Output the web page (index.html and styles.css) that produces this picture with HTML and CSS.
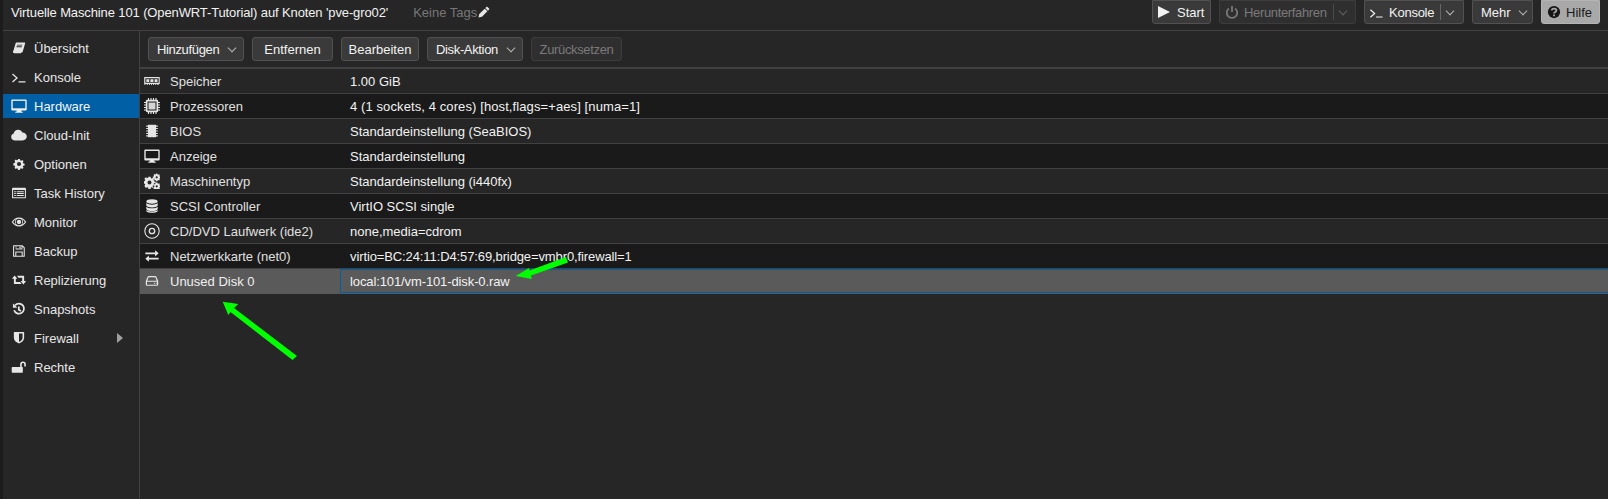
FILE: index.html
```html
<!DOCTYPE html>
<html lang="de">
<head>
<meta charset="utf-8">
<title>Hardware</title>
<link rel="stylesheet" href="styles.css">
</head>
<body>
<svg class="defs" width="0" height="0" aria-hidden="true">
  <defs>
    <symbol id="i-book" viewBox="0 -1.500 16 19"><path fill="currentColor" d="M5 1.500h9.600c.6 0 .9.500.7 1l-2.800 9.600c-.2.700-.7 1.100-1.400 1.100H2.600c-.7 0-1.300-.5-1.300-1.300 0-.3.100-.6.200-1L4 2.500c.2-.6.500-1 1-1zM5.600 4v1h6.200l.3-1zM5 6v1h6.200l.3-1zM2.600 11.400c-.2.500 0 .8.500.8h8.300l-.2.900c-.2.600-.6 1-1.200 1H2.400c-1 0-1.600-.6-1.600-1.600 0-.4 0-.7.200-1.100z"/></symbol>
    <symbol id="i-term" viewBox="0 0 16 16"><path fill="none" stroke="currentColor" stroke-width="1.300" d="M1.500 5 6 9 1.500 13M7.500 12.800h7"/></symbol>
    <symbol id="i-desktop" viewBox="0 0 16 16"><path fill="currentColor" d="M1.200 1.500h13.600c.5 0 .9.400.9.900v9.200c0 .5-.4.900-.9.900H10.200l.4 1.300h1.200v.9H4.200v-.9h1.200l.4-1.300H1.200c-.5 0-.9-.4-.9-.9V2.400c0-.5.400-.9.900-.9zM1.700 2.900v7.400h12.600V2.900z"/></symbol>
    <symbol id="i-desktop-s" viewBox="0 0 16 16"><path fill="currentColor" d="M1.200 1.500h13.600c.5 0 .9.400.9.900v9.200c0 .5-.4.900-.9.900H10.200l.4 1.300h1.200v.9H4.200v-.9h1.200l.4-1.300H1.200c-.5 0-.9-.4-.9-.9V2.400c0-.5.400-.9.900-.9z"/><path fill="#005fa5" d="M1.700 2.900v7.400h12.600V2.900z"/></symbol>
    <symbol id="i-cloud" viewBox="0 0 16 16"><path fill="currentColor" d="M4 13.500C1.900 13.500.2 12 .2 10c0-1.600 1-2.900 2.500-3.400C3 4.400 4.900 2.700 7.200 2.700c1.900 0 3.500 1.100 4.200 2.800 2.500.1 4.400 1.900 4.400 4.100 0 2.200-1.900 3.900-4.300 3.900z"/></symbol>
    <symbol id="i-gear" viewBox="-3 -3 22 22"><path fill="currentColor" fill-rule="evenodd" d="M6.800 1h2.400l.4 1.900 1.300.6 1.600-1 1.700 1.700-1 1.600.6 1.300 1.900.4v2.400l-1.900.4-.6 1.300 1 1.600-1.700 1.700-1.600-1-1.300.6-.4 1.900H6.800l-.4-1.900-1.300-.6-1.600 1-1.700-1.700 1-1.600-.6-1.300-1.900-.4V6.800l1.900-.4.6-1.300-1-1.600 1.700-1.700 1.600 1 1.300-.6zM8 5.200a2.800 2.800 0 1 0 0 5.600 2.800 2.800 0 0 0 0-5.600z"/></symbol>
    <symbol id="i-list" viewBox="-1 -1 18 18"><path fill="currentColor" fill-rule="evenodd" d="M1.200 2h13.600c.6 0 1 .4 1 1v10c0 .6-.4 1-1 1H1.200c-.6 0-1-.4-1-1V3c0-.6.400-1 1-1zM1.400 4.500v8.300h13.200V4.500zM2.600 6h1.800v1.100H2.600zM5.400 6h8v1.100h-8zM2.600 8.100h1.800v1.100H2.600zM5.400 8.100h8v1.100h-8zM2.600 10.200h1.800v1.100H2.600zM5.400 10.200h8v1.100h-8z"/></symbol>
    <symbol id="i-eye" viewBox="-.5 -.5 17 17"><path fill="currentColor" fill-rule="evenodd" d="M8 3.200c3.300 0 6 1.900 7.700 4.800C14 10.900 11.300 12.800 8 12.800S2 10.900.3 8C2 5.100 4.700 3.200 8 3.200zM8 4.600a3.400 3.400 0 1 0 0 6.800 3.400 3.400 0 0 0 0-6.800zM1.700 8c1 1.300 2 2.300 3.300 2.900A4.400 4.400 0 0 1 5 5.100C3.700 5.700 2.700 6.700 1.700 8zM11 5.100a4.400 4.400 0 0 1 0 5.800c1.300-.6 2.300-1.600 3.300-2.900-1-1.300-2-2.300-3.300-2.900z"/><circle cx="8" cy="8" r="2.300" fill="currentColor"/></symbol>
    <symbol id="i-save" viewBox="-1 -1 18 18"><path fill="currentColor" fill-rule="evenodd" d="M2 1.500h10l2.500 2.500v9.800c0 .4-.3.700-.7.700H2c-.4 0-.7-.3-.7-.7V2.200c0-.4.300-.7.700-.7zM2.500 2.700v10.600h1.300V8.500h8.400v4.800h1.100V4.500l-1.400-1.400v3.200H4.300V2.700zM5 2.700v2.500h5.800V2.700zM8.500 3h1.300v1.900H8.500zM5 9.700v3.600h6V9.700z"/></symbol>
    <symbol id="i-retweet" viewBox="-1 -2 20 20"><path fill="currentColor" d="M3.500 2.500 7 6.500H5v4h5.500l1.800 2.500H3.300c-.4 0-.7-.3-.7-.7V6.500H.1zM6.500 2.700h8.200c.4 0 .7.300.7.700v6h2.500L14.500 13.500 11 9.400h2V5.200H8.300z"/></symbol>
    <symbol id="i-history" viewBox="-1.500 -1.500 19 19"><path fill="none" stroke="currentColor" stroke-width="2.100" d="M3.300 3.700A6 6 0 1 1 2.200 9.500M7.800 5v3.800l2.500 1.500"/><path fill="currentColor" d="M.8 1.500 6 6.600H.8z"/></symbol>
    <symbol id="i-shield" viewBox="-1.500 -1 19 19"><path fill="currentColor" fill-rule="evenodd" d="M2.500 1.500h11c.4 0 .6.300.6.600v6.300c0 3.200-3.100 5.300-6.100 6.600-3-1.300-6.100-3.400-6.100-6.600V2.100c0-.3.200-.6.600-.6zM8 3.200v9.900c2.100-1 4.200-2.600 4.200-4.700V3.200z"/></symbol>
    <symbol id="i-unlock" viewBox="-1 -1 18 18"><path fill="currentColor" d="M.5 8h8.800V5a3.200 3.200 0 0 1 6.400 0v2.400h-1.800V5a1.400 1.400 0 0 0-2.800 0v3h.5c.4 0 .7.300.7.700v5c0 .4-.3.700-.7.700H.5c-.4 0-.7-.3-.7-.7v-5c0-.4.300-.7.700-.7z"/></symbol>
    <symbol id="i-memory" viewBox="0 0 18 12"><path fill="currentColor" fill-rule="evenodd" d="M.8 1.500h16.400c.3 0 .5.200.5.500v7c0 .3-.2.500-.5.500h-.7v1H15V9.500h-1.300v1h-1V9.500h-1.400v1h-1V9.500H8.900v1h-1V9.500H6.600v1h-1V9.500H4.200v1h-1V9.500H1.500v1H.5V9.500c-.2 0-.3-.2-.3-.5V2c0-.3.200-.5.600-.5zM1.500 3v5h15V3zM2.700 4h3.200v3H2.700zM7.200 4h3.400v3H7.200zM11.900 4h3.300v3h-3.300z"/></symbol>
    <symbol id="i-cpu" viewBox="0 0 16 16"><path fill="currentColor" fill-rule="evenodd" d="M3.200 1.800h9.600c.8 0 1.400.6 1.400 1.400v9.600c0 .8-.6 1.400-1.400 1.400H3.200c-.8 0-1.400-.6-1.400-1.400V3.200c0-.8.600-1.400 1.400-1.400zM3.500 3.500v9h9v-9z"/><path fill="#d4d4d4" d="M4.500 4.500h7v7h-7z"/><path fill="none" stroke="currentColor" stroke-width="1.100" d="M4.500 0v2M7 0v2M9.500 0v2M12 0v2M4.500 14v2M7 14v2M9.500 14v2M12 14v2M0 4.500h2M0 7h2M0 9.500h2M0 12h2M14 4.500h2M14 7h2M14 9.500h2M14 12h2"/></symbol>
    <symbol id="i-chip" viewBox="0 -1 16 18"><path fill="currentColor" d="M3.500 1h9v14h-9z"/><path fill="none" stroke="currentColor" d="M1.500 2.500h13M1.500 5.200h13M1.500 8h13M1.500 10.800h13M1.500 13.500h13" stroke-width="1.300"/></symbol>
    <symbol id="i-cogs" viewBox="0 0 16 16"><path fill="currentColor" fill-rule="evenodd" d="M4.400 3.800h2.200l.3 1.400 1 .4 1.200-.8 1.500 1.500-.8 1.200.4 1 1.400.3v2.200l-1.400.3-.4 1 .8 1.200-1.500 1.500-1.200-.8-1 .4-.3 1.400H4.400l-.3-1.400-1-.4-1.200.8L.4 13l.8-1.200-.4-1-1.400-.3V8.300l1.400-.3.4-1-.8-1.200 1.500-1.500 1.200.8 1-.4zM5.500 7.400a2 2 0 1 0 0 4 2 2 0 0 0 0-4zM12 .5h1.400l.2.900.6.300.8-.5.900.9-.5.800.3.600.9.200v1.400l-.9.200-.3.600.5.800-.9.900-.8-.5-.6.300-.2.900H12l-.2-.9-.6-.3-.8.500-.9-.9.500-.8-.3-.6-.9-.2V3.600l.9-.2.300-.6-.5-.8.900-.9.800.5.600-.3zM12.700 3.200a1.100 1.100 0 1 0 0 2.200 1.100 1.100 0 0 0 0-2.200zM12 9.500h1.400l.2.900.6.300.8-.5.900.9-.5.800.3.600.9.200V14l-.9.200-.3.600.5.800-.9.900-.8-.5-.6.300-.2.400H12l-.2-.4-.6-.3-.8.500-.9-.9.500-.8-.3-.6-.9-.2v-1.400l.9-.2.300-.6-.5-.8.900-.9.800.5.600-.3zM12.700 12.200a1.100 1.100 0 1 0 0 2.200 1.100 1.100 0 0 0 0-2.200z"/></symbol>
    <symbol id="i-db" viewBox="-1 -1 18 18"><path fill="currentColor" d="M8 .5c3.600 0 6.400 1 6.400 2.500S11.600 5.500 8 5.500 1.600 4.500 1.600 3 4.400.5 8 .5zM1.600 4.700C3 5.900 5.400 6.500 8 6.500s5-.6 6.400-1.800v2.500c0 1.500-2.800 2.500-6.400 2.500s-6.400-1-6.400-2.500zM1.600 8.800C3 10 5.400 10.600 8 10.600s5-.6 6.400-1.800v2.400c0 1.500-2.800 2.600-6.400 2.600s-6.400-1.100-6.400-2.600z"/><path fill="currentColor" d="M1.600 12.600c1.400 1.100 3.800 1.700 6.400 1.700s5-.6 6.400-1.700v.9c0 1.200-2.800 2-6.400 2s-6.400-.8-6.400-2z"/></symbol>
    <symbol id="i-cd" viewBox="0 0 16 16"><path fill="none" stroke="currentColor" stroke-width="1.100" d="M8 .8a7.200 7.200 0 1 1 0 14.400A7.200 7.200 0 0 1 8 .8z"/><path fill="none" stroke="currentColor" stroke-width="1.300" d="M8 5.300a2.700 2.700 0 1 1 0 5.400 2.700 2.700 0 0 1 0-5.400z"/></symbol>
    <symbol id="i-exchange" viewBox="-1 -1 18 18"><path fill="currentColor" d="M11.500 1.500 15.500 5l-4 3.500V6H.5V4h11zM4.500 7.500V10h11v2h-11v2.500L.5 11z"/></symbol>
    <symbol id="i-hdd" viewBox="-2 -2 20 20"><path fill="none" stroke="currentColor" stroke-width="1.500" d="M4 2.600h8c.4 0 .6.200.8.500L15 8.300v4c0 .6-.4 1-1 1H2c-.6 0-1-.4-1-1v-4l2.200-5.200c.2-.3.400-.5.800-.5zM1 8.300h14"/><path fill="currentColor" d="M10.500 10.300h1.200v1.200h-1.200zM12.700 10.300h1.200v1.200h-1.200z"/></symbol>
    <symbol id="i-play" viewBox="0 0 14 14"><path fill="currentColor" d="M0 1 12 7 0 13z"/></symbol>
    <symbol id="i-power" viewBox="0 0 16 16"><path fill="none" stroke="currentColor" stroke-width="2" d="M4.400 4a6 6 0 1 0 7.200 0M8 1v7"/></symbol>
    <symbol id="i-help" viewBox="0 0 16 16"><circle cx="8" cy="8" r="7" fill="#161616"/><path fill="none" stroke="#a8a8a8" stroke-width="2" d="M5.300 6.200c.2-1.500 1.300-2.200 2.700-2.200s2.800.8 2.800 2.200C10.800 8 8 7.800 8 9.600"/><path fill="#a8a8a8" d="M7 10.800h2.100v2H7z"/></symbol>
    <symbol id="i-pencil" viewBox="0 0 16 16"><path fill="currentColor" d="M11.200 1.200c.4-.4 1-.4 1.400 0l2.200 2.200c.4.400.4 1 0 1.400l-1.500 1.500-3.600-3.600zM8.900 3.500l3.600 3.600-7.200 7.200L.6 15.400l1.100-4.700z"/></symbol>
  </defs>
</svg>

<div class="page">
  <header class="titlebar">
    <div class="title">Virtuelle Maschine 101 (OpenWRT-Tutorial) auf Knoten 'pve-gro02'</div>
    <div class="tags">Keine Tags<svg class="pencil"><use href="#i-pencil"/></svg></div>
    <div class="top-actions">
      <button class="btn w-start"><svg class="btn-ico play"><use href="#i-play"/></svg>Start</button>
      <button class="btn w-shut off"><svg class="btn-ico"><use href="#i-power"/></svg><span class="tight">Herunterfahren</span><span class="split"></span><span class="caret"></span></button>
      <button class="btn w-cons"><svg class="btn-ico wide"><use href="#i-term"/></svg><span class="snug">Konsole</span><span class="split"></span><span class="caret"></span></button>
      <button class="btn w-more">Mehr<span class="caret lone"></span></button>
      <button class="btn w-help help"><svg class="btn-ico"><use href="#i-help"/></svg>Hilfe</button>
    </div>
  </header>

  <div class="body">
    <nav class="side">
      <a class="nav"><svg class="nav-ico"><use href="#i-book"/></svg>Übersicht</a>
      <a class="nav"><svg class="nav-ico"><use href="#i-term"/></svg>Konsole</a>
      <a class="nav active"><svg class="nav-ico"><use href="#i-desktop-s"/></svg>Hardware</a>
      <a class="nav"><svg class="nav-ico"><use href="#i-cloud"/></svg>Cloud-Init</a>
      <a class="nav"><svg class="nav-ico"><use href="#i-gear"/></svg>Optionen</a>
      <a class="nav"><svg class="nav-ico"><use href="#i-list"/></svg>Task History</a>
      <a class="nav"><svg class="nav-ico"><use href="#i-eye"/></svg>Monitor</a>
      <a class="nav"><svg class="nav-ico"><use href="#i-save"/></svg>Backup</a>
      <a class="nav"><svg class="nav-ico"><use href="#i-retweet"/></svg>Replizierung</a>
      <a class="nav"><svg class="nav-ico"><use href="#i-history"/></svg>Snapshots</a>
      <a class="nav"><svg class="nav-ico"><use href="#i-shield"/></svg>Firewall<span class="expander"></span></a>
      <a class="nav"><svg class="nav-ico"><use href="#i-unlock"/></svg>Rechte</a>
    </nav>

    <main class="content">
      <div class="toolbar">
        <button class="btn t-add"><span class="tight">Hinzufügen</span><span class="caret lone"></span></button>
        <button class="btn t-del">Entfernen</button>
        <button class="btn t-edit">Bearbeiten</button>
        <button class="btn t-disk"><span class="tight">Disk-Aktion</span><span class="caret lone"></span></button>
        <button class="btn t-reset off"><span class="tight">Zurücksetzen</span></button>
      </div>
      <div class="rows">
        <div class="row"><div class="c1"><svg class="row-ico"><use href="#i-memory"/></svg>Speicher</div><div class="c2">1.00 GiB</div></div>
        <div class="row"><div class="c1"><svg class="row-ico"><use href="#i-cpu"/></svg>Prozessoren</div><div class="c2 airy">4 (1 sockets, 4 cores) [host,flags=+aes] [numa=1]</div></div>
        <div class="row"><div class="c1"><svg class="row-ico"><use href="#i-chip"/></svg>BIOS</div><div class="c2">Standardeinstellung (SeaBIOS)</div></div>
        <div class="row"><div class="c1"><svg class="row-ico"><use href="#i-desktop"/></svg>Anzeige</div><div class="c2">Standardeinstellung</div></div>
        <div class="row"><div class="c1"><svg class="row-ico"><use href="#i-cogs"/></svg>Maschinentyp</div><div class="c2">Standardeinstellung (i440fx)</div></div>
        <div class="row"><div class="c1"><svg class="row-ico"><use href="#i-db"/></svg>SCSI Controller</div><div class="c2">VirtIO SCSI single</div></div>
        <div class="row"><div class="c1"><svg class="row-ico"><use href="#i-cd"/></svg>CD/DVD Laufwerk (ide2)</div><div class="c2">none,media=cdrom</div></div>
        <div class="row"><div class="c1"><svg class="row-ico"><use href="#i-exchange"/></svg>Netzwerkkarte (net0)</div><div class="c2 close">virtio=BC:24:11:D4:57:69,bridge=vmbr0,firewall=1</div></div>
        <div class="row selected"><div class="c1"><svg class="row-ico"><use href="#i-hdd"/></svg>Unused Disk 0</div><div class="c2 close">local:101/vm-101-disk-0.raw</div></div>
      </div>
    </main>
  </div>

  <svg class="arrows" viewBox="0 0 1608 499" width="1608" height="499" aria-hidden="true">
    <path fill="#00ff00" d="M222.700 301.700 238.300 304 234 308 297 356 292.500 360 230.500 312 228.300 315z"/>
    <path fill="#00ff00" d="M515.700 276 529 268 529.500 270.500 566 257 568 262.500 531 275.500 531.700 279z"/>
  </svg>
</div>
</body>
</html>
```
FILE: styles.css
```css
* { box-sizing: border-box; }
html, body { margin: 0; padding: 0; }
body {
  width: 1608px;
  height: 499px;
  overflow: hidden;
  background: #262626;
  color: #f2f2f2;
  font: 13px/15px "Liberation Sans", Arial, sans-serif;
}
.defs { display: block; height: 0; }
.page {
  position: relative;
  width: 1608px;
  height: 499px;
  padding-left: 3px;
  background: #262626;
}
.page::before {
  content: "";
  position: absolute;
  left: 0; top: 0; bottom: 0;
  width: 3px;
  background: #1c1c1c;
}
.titlebar {
  display: flex;
  align-items: center;
  height: 31px;
  padding: 0 8px 6px 8px;
  border-bottom: 1px solid #414141;
}
.title { color: #f2f2f2; letter-spacing: -.12px; }
.tags {
  display: flex;
  align-items: center;
  margin-left: 25px;
  color: #777;
}
.pencil { width: 12px; height: 12px; margin-left: 1px; color: #e6e6e6; }
.top-actions { display: flex; gap: 8px; margin-left: auto; }

.tight { letter-spacing: -.35px; }
.snug { letter-spacing: -.25px; }
.airy { letter-spacing: .1px; }
.close { letter-spacing: -.11px; }

.btn {
  display: flex;
  align-items: center;
  height: 24px;
  padding: 0 8px;
  border: 1px solid #515151;
  border-radius: 3px;
  background: #3a3a3a;
  color: #f2f2f2;
  font: inherit;
  white-space: nowrap;
}
.btn.off { background: #2f2f2f; border-color: #3c3c3c; color: #7a7a7a; }
.btn.help { background: #a8a8a8; border-color: #b4b4b4; color: #1a1a1a; }
.titlebar .btn { border-top-left-radius: 0; border-top-right-radius: 0; }
.btn-ico { width: 14px; height: 14px; margin-right: 5px; flex: none; }
.btn-ico.wide { width: 15px; height: 15px; }
.w-start { width: 59px; padding-left: 5px; }
.w-shut { width: 137px; padding-left: 5px; }
.w-cons { width: 100px; padding-left: 4px; }
.w-more { width: 61px; }
.w-help { width: 59px; padding-left: 5px; }
.split { width: 1px; height: 16px; margin: 0 6px; background: #666; flex: none; }
.off .split { background: #4a4a4a; }
.caret {
  width: 6px; height: 6px;
  margin-top: -3px;
  border-right: 1px solid currentColor;
  border-bottom: 1px solid currentColor;
  transform: rotate(45deg) scale(1.05);
  opacity: .65;
  flex: none;
}
.caret.lone { margin-left: 10px; }
.w-more .caret.lone { margin-left: 9px; }

.body { display: flex; height: 468px; }
.side {
  flex: none;
  width: 137px;
  padding-top: 5px;
  border-right: 1px solid #414141;
}
.nav {
  display: flex;
  align-items: center;
  height: 24px;
  margin-bottom: 5px;
  padding-left: 8px;
  color: #e6e6e6;
}
.nav.active { background: #005fa5; color: #f4f4f4; }
.nav-ico { width: 16px; height: 16px; margin-right: 7px; flex: none; color: #e6e6e6; }
.nav.active .nav-ico { color: #f0f0f0; }
.expander {
  width: 0; height: 0;
  margin-left: 38px;
  border-left: 6px solid #a0a0a0;
  border-top: 5px solid transparent;
  border-bottom: 5px solid transparent;
}

.content { flex: 1; min-width: 0; display: flex; flex-direction: column; }
.toolbar {
  display: flex;
  gap: 8px;
  height: 38px;
  padding: 6px 0 0 8px;
  border-bottom: 2px solid #414141;
}
.t-add { width: 96px; }
.t-del { width: 81px; justify-content: center; }
.t-edit { width: 78px; justify-content: center; }
.t-disk { width: 96px; }
.t-reset { width: 91px; justify-content: center; }

.rows { display: flex; flex-direction: column; }
.row {
  display: flex;
  height: 25px;
  background: #262626;
  border-bottom: 1px solid #414141;
}
.row:nth-child(even) { background: #1a1a1a; }
.row.selected { background: #5a5a5a; border-bottom-color: #5a5a5a; color: #f2f2f2; }
.c1 {
  display: flex;
  align-items: center;
  width: 200px;
  flex: none;
  padding-left: 4px;
  color: #e0e0e0;
}
.c2 {
  display: flex;
  align-items: center;
  flex: 1;
  padding-left: 10px;
  color: #f2f2f2;
}
.selected .c1 { color: #f0f0f0; }
.selected .c2 { border: 1px solid #005fa5; border-right: 0; padding-left: 9px; }
.row-ico { width: 16px; height: 16px; margin-right: 10px; flex: none; color: #e6e6e6; }

.arrows { position: absolute; left: 0; top: 0; pointer-events: none; }
```
